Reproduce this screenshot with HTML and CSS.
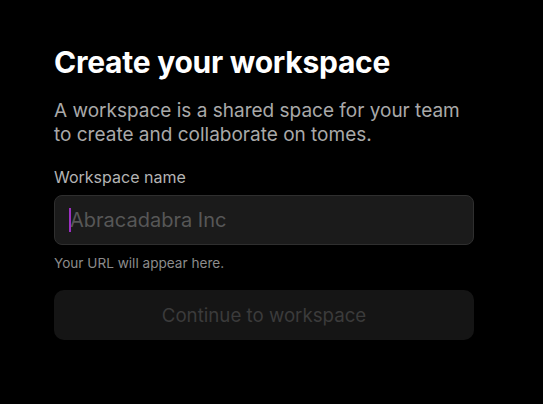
FILE: index.html
```html
<!DOCTYPE html>
<html lang="en">
<head>
  <meta charset="UTF-8" />
  <meta name="viewport" content="width=device-width, initial-scale=1.0"/>
  <title>Create your workspace</title>
  <link rel="stylesheet" href="styles.css">
</head>
<body>

  <main class="panel">
    <h1>Create your workspace</h1>
    <p class="intro">A workspace is a shared space for your team to create and collaborate on tomes.</p>

    <form id="workspaceForm">
      <label for="name">Workspace name</label>
      <div class="field">
        <input type="text" id="name" name="name" placeholder="Abracadabra Inc">
        <span class="caret"></span>
      </div>
      <div class="hint">Your URL will appear here.</div>

      <button type="submit" disabled>Continue to workspace</button>
    </form>
  </main>

</body>
</html>
```

FILE: styles.css
```css
body {
  margin: 0;
  background-color: #000;
  color: #fff;
  font-family: Inter, "Noto Sans", sans-serif;
}
.panel {
  width: 420px;
  padding: 43px 0 0 54px;
}
h1 {
  margin: 0;
  font-size: 30px;
  line-height: 38px;
  font-weight: 700;
  letter-spacing: -0.25px;
}
.intro {
  margin: 18px 0 0;
  font-size: 19px;
  line-height: 24px;
  color: #a9a9a9;
}
label {
  display: block;
  margin-top: 20px;
  font-size: 16px;
  line-height: 20px;
  color: #b4b4b4;
}
.field {
  position: relative;
  margin-top: 8px;
}
input {
  box-sizing: border-box;
  width: 100%;
  height: 50px;
  padding: 0 15px;
  background-color: #1b1b1b;
  border: 1px solid #2f2f2f;
  border-radius: 8px;
  font-family: inherit;
  font-size: 20px;
  color: #ddd;
  outline: none;
}
input::placeholder {
  color: #575757;
}
.caret {
  position: absolute;
  left: 15px;
  top: 13px;
  width: 2px;
  height: 24px;
  background-color: #9b2fc1;
}
.hint {
  margin-top: 9px;
  font-size: 13.6px;
  line-height: 18px;
  color: #8c8c8c;
}
button {
  display: block;
  width: 100%;
  height: 50px;
  margin-top: 18px;
  background-color: #151515;
  color: #3b3b3b;
  border: none;
  border-radius: 10px;
  font-family: inherit;
  font-size: 18.7px;
}
```
